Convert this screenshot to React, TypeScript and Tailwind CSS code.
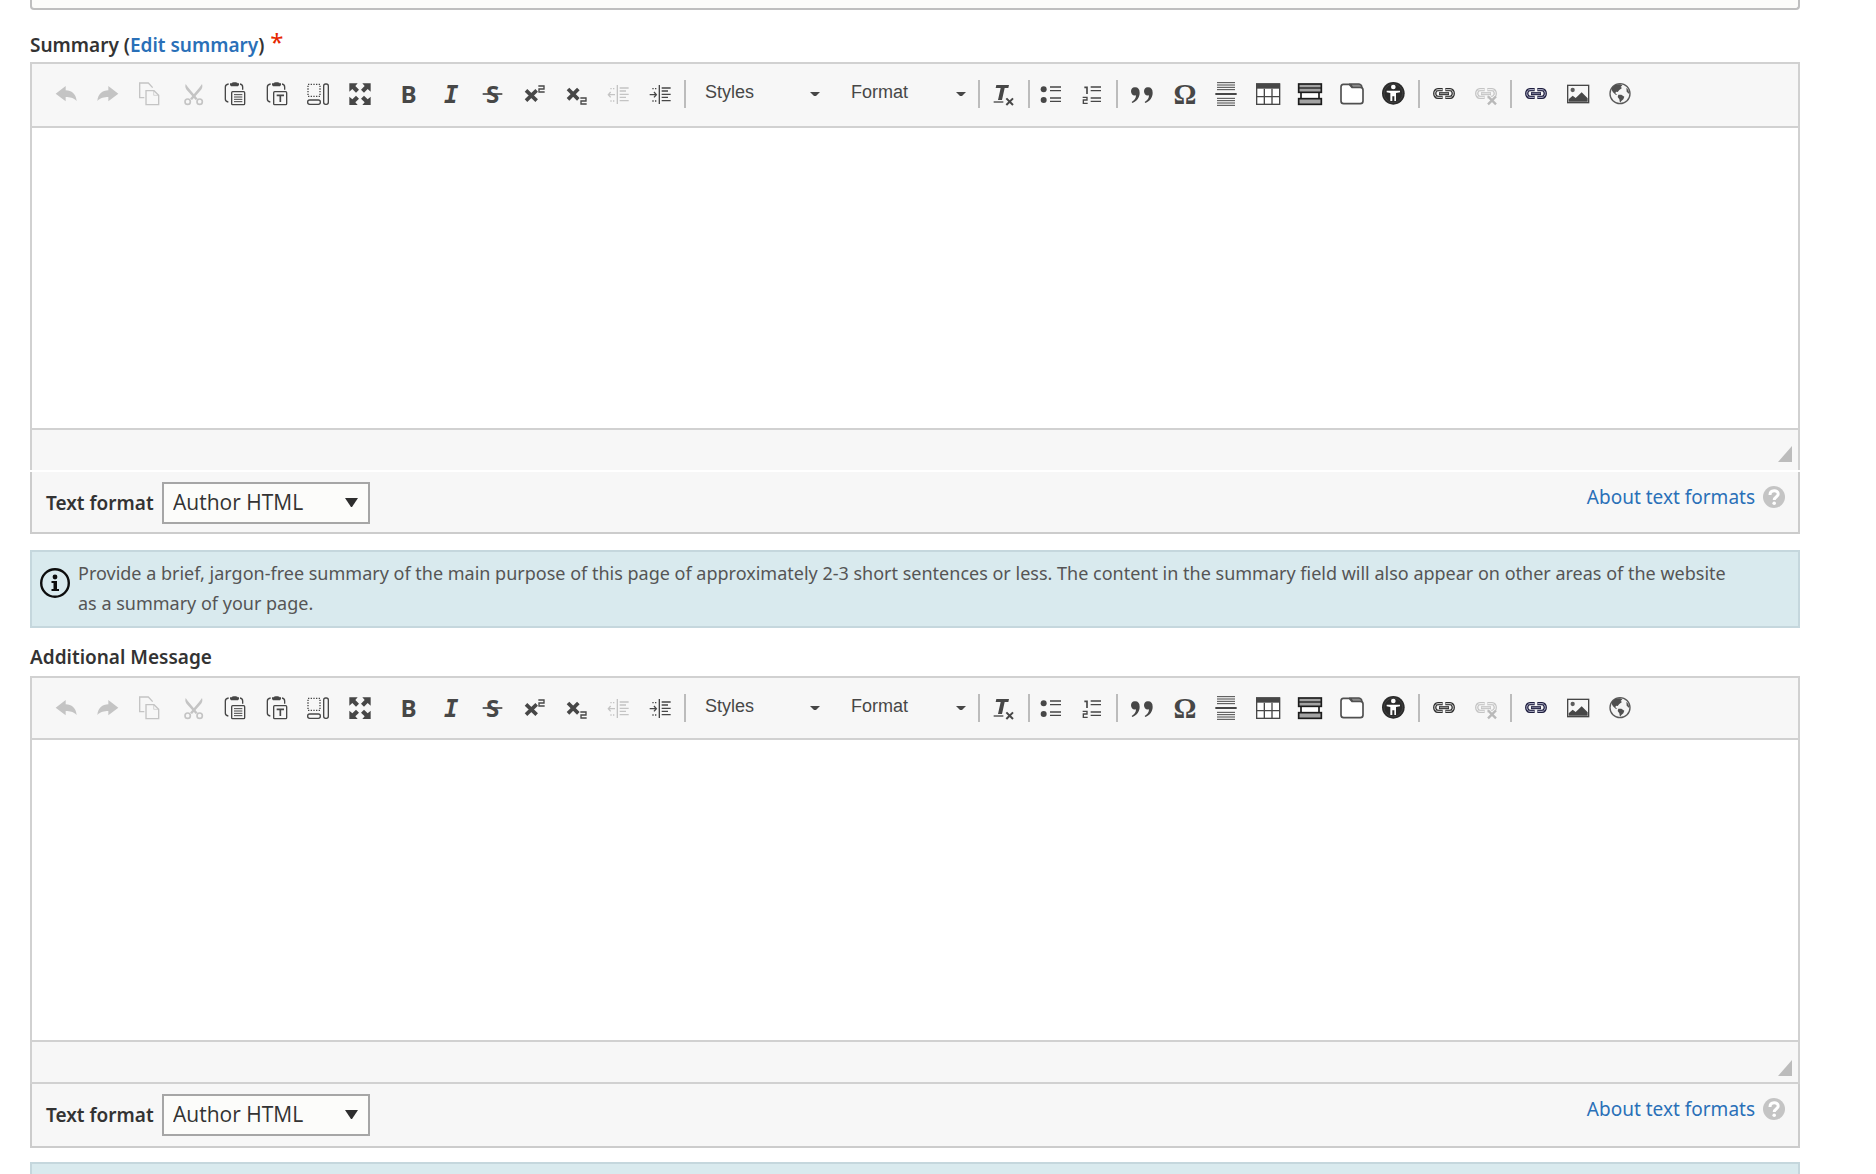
import type { ReactNode } from "react";

const INK = "#474747";
const FAINT = "#c4c4c4";

function Icon({ children }: { children: ReactNode }) {
  return (
    <svg viewBox="0 0 72 72" className="size-6 overflow-visible" aria-hidden="true" fill="none">
      {children}
    </svg>
  );
}

const undoArrow = "M5 35 L35 12 V25 C53 25 66 36 68 57 C58 47 48 45 35 45 V58 Z";

const undo = (
  <Icon>
    <path d={undoArrow} fill={FAINT} />
  </Icon>
);

const redo = (
  <Icon>
    <path d={undoArrow} fill={FAINT} transform="translate(72 0) scale(-1 1)" />
  </Icon>
);

const copy = (
  <Icon>
    <g stroke={FAINT} strokeWidth="4">
      <path d="M19 47 H5 V3 H31 L44 17" />
      <path d="M24 26 H48 L62 40 V68 H24 Z" />
      <path d="M47 27 V40 H61" strokeWidth="2" />
    </g>
  </Icon>
);

const cut = (
  <Icon>
    <path d="M17 6 C14 14 17 21 23 27 L47 54 L53 50 L24 16 Z" fill={FAINT} />
    <path d="M66 6 C69 14 66 21 60 27 L36 54 L30 50 L59 16 Z" fill={FAINT} />
    <circle cx="23" cy="59" r="8" stroke={FAINT} strokeWidth="5" />
    <circle cx="59" cy="59" r="8" stroke={FAINT} strokeWidth="5" />
  </Icon>
);

const clipboard = (
  <>
    <path d="M20 6 C12 7 10 9 10 15 V52 C10 57 12 59 19 60" stroke={INK} strokeWidth="4" />
    <path d="M54 6 C60 7 62 9 62 15 V23" stroke={INK} strokeWidth="4" />
    <path d="M24 4 H29 C30 0 46 0 47 4 H51 V9 L48 13 H27 L24 9 Z" fill={INK} />
    <rect x="29" y="29" width="39" height="39" rx="3" stroke={INK} strokeWidth="4" />
  </>
);

const paste = (
  <Icon>
    {clipboard}
    <path d="M36 38 H61 M36 45 H61 M36 52 H61 M36 59 H61" stroke={INK} strokeWidth="3" />
  </Icon>
);

const pasteText = (
  <Icon>
    {clipboard}
    <path d="M38 40 H60 M49 38 V60" stroke={INK} strokeWidth="5" />
  </Icon>
);

const selectAll = (
  <Icon>
    <rect x="6" y="7" width="36" height="36" stroke={INK} strokeWidth="4" strokeDasharray="4 4" />
    <rect x="5" y="54" width="38" height="13" rx="6" stroke={INK} strokeWidth="4" />
    <rect x="53" y="6" width="14" height="61" rx="6" stroke={INK} strokeWidth="4" />
  </Icon>
);

const cornerArrow = "M4 4 H29 L22 12 L33 23 L24 32 L13 21 L4 29 Z";

const maximize = (
  <Icon>
    <g fill={INK}>
      <path d={cornerArrow} />
      <path d={cornerArrow} transform="translate(72 0) scale(-1 1)" />
      <path d={cornerArrow} transform="translate(0 73) scale(1 -1)" />
      <path d={cornerArrow} transform="translate(72 73) scale(-1 -1)" />
    </g>
  </Icon>
);

function Letter({ char, className, x = 36, y = 63, size = 72 }: { char: string; className: string; x?: number; y?: number; size?: number }) {
  return (
    <text x={x} y={y} fontSize={size} textAnchor="middle" fill={INK} className={className}>
      {char}
    </text>
  );
}

const bold = (
  <Icon>
    <Letter char="B" className="font-['Open_Sans'] font-bold" x={38} />
  </Icon>
);

const italic = (
  <Icon>
    <Letter char="I" className="font-['DejaVu_Sans_Mono'] font-bold italic" x={40} />
  </Icon>
);

const strike = (
  <Icon>
    <Letter char="S" className="font-['Open_Sans'] font-bold" x={38} />
    <path d="M8 36 H67" stroke={INK} strokeWidth="5" />
  </Icon>
);

const smallTwo = "M0 2 H17 V11 H2 V20 H19";

const superscript = (
  <Icon>
    <path d="M12 25 L44 56 M44 25 L12 56" stroke={INK} strokeWidth="11" />
    <path d={smallTwo} transform="translate(49 10)" stroke={INK} strokeWidth="4" />
  </Icon>
);

const subscript = (
  <Icon>
    <path d="M12 21 L43 52 M43 21 L12 52" stroke={INK} strokeWidth="11" />
    <path d={smallTwo} transform="translate(49 46)" stroke={INK} strokeWidth="4" />
  </Icon>
);

const indentLines = "M41 18 H68 M41 27 H60 M41 37 H68 M41 46 H60 M41 56 H68";
const indentDots = "M13 20 H17 M21 20 H25 M13 57 H17 M21 57 H25";

const outdent = (
  <Icon>
    <g stroke={FAINT} strokeWidth="4">
      <path d={indentLines} />
      <path d={indentDots} />
      <path d="M34 9 V66 M7 38 H27 M14 30 L7 38 L14 46" />
    </g>
  </Icon>
);

const indent = (
  <Icon>
    <g stroke={INK} strokeWidth="4">
      <path d={indentLines} />
      <path d={indentDots} />
      <path d="M34 9 V66 M5 38 H25 M18 30 L25 38 L18 46" />
    </g>
  </Icon>
);

const removeFormat = (
  <Icon>
    <path d="M13 9 H51 L49 18 H38 L30 54 H18 L26 18 H11 Z" fill={INK} />
    <path d="M5 60 H34" stroke={INK} strokeWidth="4" />
    <path d="M43 49 L63 69 M63 49 L43 69" stroke={INK} strokeWidth="6" />
  </Icon>
);

const bullets = (
  <Icon>
    <circle cx="8" cy="22" r="9" fill={INK} />
    <circle cx="8" cy="54" r="9" fill={INK} />
    <path d="M27 15 H60 M27 26 H60 M27 48 H60 M27 58 H60" stroke={INK} strokeWidth="4" />
  </Icon>
);

const numbers = (
  <Icon>
    <path d="M10 16 H18 V36" stroke={INK} strokeWidth="5" />
    <path d="M5 46 H18 V54 H7 V64 H20" stroke={INK} strokeWidth="4" />
    <path d="M29 15 H60 M29 26 H60 M29 48 H60 M29 58 H60" stroke={INK} strokeWidth="4" />
  </Icon>
);

const quoteMark = "M14 16 C23 15 29 21 29 32 C29 46 21 57 7 63 L5 60 C14 55 18 48 18 40 C9 43 3 36 3 28 C3 21 7 16 14 16 Z";

const quote = (
  <Icon>
    <path d={quoteMark} fill={INK} />
    <path d={quoteMark} transform="translate(39 0)" fill={INK} />
  </Icon>
);

const omega = (
  <Icon>
    <Letter char="Ω" className="font-['Liberation_Serif'] font-bold" x={39} y={66} size={86} />
  </Icon>
);

const pageBreak = (
  <Icon>
    <path
      d="M9 2 H63 M9 9 H63 M9 16 H63 M9 23 H63 M9 49 H63 M9 56 H63 M9 63 H63 M9 70 H63"
      stroke={INK}
      strokeWidth="3"
    />
    <path d="M4 36 H68" stroke={INK} strokeWidth="6" />
  </Icon>
);

const table = (
  <Icon>
    <rect x="2" y="6" width="69" height="61" fill="#ffffff" stroke={INK} strokeWidth="4" />
    <rect x="0" y="4" width="72" height="16" fill={INK} />
    <path d="M25 20 V67 M48 20 V67 M2 44 H70" stroke={INK} strokeWidth="4" />
  </Icon>
);

const template = (
  <Icon>
    <rect x="9" y="28" width="54" height="24" fill="#ffffff" stroke="#1c1c1c" strokeWidth="5" />
    <rect x="2" y="6" width="68" height="25" fill="#a3a3a3" stroke="#1c1c1c" strokeWidth="5" />
    <path d="M2 18 H70" stroke="#1c1c1c" strokeWidth="4" />
    <rect x="2" y="50" width="68" height="17" fill="#a3a3a3" stroke="#1c1c1c" strokeWidth="5" />
  </Icon>
);

const folder = (
  <Icon>
    <path
      d="M10 7 H28 L36 16 H61 Q69 16 69 24 V57 Q69 65 61 65 H11 Q3 65 3 57 V15 Q3 7 10 7 Z"
      fill="#ffffff"
      stroke="#505050"
      strokeWidth="5"
    />
    <path d="M31 6 H57 Q65 7 66 16 H38 Z" fill="#8b8b8b" stroke="#505050" strokeWidth="4" />
  </Icon>
);

const accessibility = (
  <Icon>
    <circle cx="34" cy="34" r="34" fill="#2b2b2b" />
    <circle cx="34" cy="34" r="28" stroke="#4a4a4a" strokeWidth="2" />
    <circle cx="34" cy="15" r="7" fill="#ffffff" />
    <path d="M14 26 H54 V31 L42 33 V57 H37 V43 H31 V57 H25 V33 L14 31 Z" fill="#ffffff" />
  </Icon>
);

function chain(outer: string, inner: string) {
  return (
    <>
      <path
        d="M32 23 H18 C5 23 5 46 18 46 H32 M40 23 H54 C67 23 67 46 54 46 H40"
        stroke={outer}
        strokeWidth="10"
      />
      <path
        d="M31 23 H18 C5 23 5 46 18 46 H31 M41 23 H54 C67 23 67 46 54 46 H41"
        stroke={inner}
        strokeWidth="3"
      />
      <path d="M21 35 H51" stroke={outer} strokeWidth="9" />
      <path d="M23 35 H49" stroke={inner} strokeWidth="2" />
    </>
  );
}

const link = <Icon>{chain("#2e2e2e", "#dedede")}</Icon>;

const linkNavy = <Icon>{chain("#1c1c3d", "#bdbdd2")}</Icon>;

const unlink = (
  <Icon>
    {chain("#c4c4c4", "#f7f7f7")}
    <path d="M42 43 L66 67 M66 43 L42 67" stroke="#f7f7f7" strokeWidth="12" />
    <path d="M42 43 L66 67 M66 43 L42 67" stroke="#b9b9b9" strokeWidth="7" />
  </Icon>
);

const image = (
  <Icon>
    <rect x="5" y="10" width="63" height="52" fill="#f7f7f7" stroke={INK} strokeWidth="4" />
    <circle cx="20" cy="24" r="6.5" fill="#5d5d5d" />
    <path d="M8 59 V52 L20 41 L29 48 L47 31 L65 49 V59 Z" fill={INK} />
  </Icon>
);

const globe = (
  <Icon>
    <circle cx="36" cy="35" r="30" fill="#f4f4f4" stroke="#5a5a5a" strokeWidth="4" />
    <path
      d="M12 17 C18 9 27 6 37 7 L43 10 L38 15 L42 18 L34 24 L29 30 L24 29 L22 34 L28 38 L23 38 L15 31 L11 24 Z"
      fill="#505050"
    />
    <path d="M31 38 L40 38 L49 44 L46 52 L40 57 L36 63 L34 52 L29 45 Z" fill="#505050" />
    <path d="M55 17 L61 24 L64 35 L60 34 L56 28 Z" fill="#505050" />
  </Icon>
);

type Tool = { label: string; icon: ReactNode; disabled?: boolean };

const history: Tool[] = [
  { label: "Undo", icon: undo, disabled: true },
  { label: "Redo", icon: redo, disabled: true },
  { label: "Copy", icon: copy, disabled: true },
  { label: "Cut", icon: cut, disabled: true },
  { label: "Paste", icon: paste },
  { label: "Paste as plain text", icon: pasteText },
  { label: "Select all", icon: selectAll },
  { label: "Maximize", icon: maximize },
];

const styling: Tool[] = [
  { label: "Bold", icon: bold },
  { label: "Italic", icon: italic },
  { label: "Strikethrough", icon: strike },
  { label: "Superscript", icon: superscript },
  { label: "Subscript", icon: subscript },
  { label: "Decrease indent", icon: outdent, disabled: true },
  { label: "Increase indent", icon: indent },
];

const inserts: Tool[] = [
  { label: "Block quote", icon: quote },
  { label: "Insert special character", icon: omega },
  { label: "Insert page break", icon: pageBreak },
  { label: "Table", icon: table },
  { label: "Templates", icon: template },
  { label: "Browse files", icon: folder },
  { label: "Accessibility checker", icon: accessibility },
];

function Tools({ items, tight = false }: { items: Tool[]; tight?: boolean }) {
  return (
    <div className="flex">
      {items.map((t) => (
        <button
          key={t.label}
          type="button"
          aria-label={t.label}
          disabled={t.disabled}
          className={`flex h-8 items-center justify-center ${tight ? "w-10" : "w-[42px]"}`}
        >
          {t.icon}
        </button>
      ))}
    </div>
  );
}

function Separator() {
  return <div className="mx-[3px] mt-0.5 h-7 w-0.5 bg-[#bcbcbc]" />;
}

function Combo({ name, width }: { name: string; width: string }) {
  return (
    <div className={`relative ${width}`}>
      <select
        aria-label={name}
        className="block h-7 w-full appearance-none bg-transparent pl-4 font-['Liberation_Sans',sans-serif] text-[18px] leading-7 text-[#474747]"
      >
        <option>{name}</option>
      </select>
      <svg viewBox="0 0 10 5" className="pointer-events-none absolute top-3.5 left-[121px] h-[5px] w-2.5" aria-hidden="true">
        <path d="M0 0 H10 L6 4 H4 Z" fill={INK} />
      </svg>
    </div>
  );
}

function Editor({ id, first = false }: { id: string; first?: boolean }) {
  return (
    <div>
      <div className="border-2 border-b-0 border-[#d1d1d1]">
        <div role="toolbar" className={`flex items-start bg-[#f7f7f7] pt-3.5 pl-[13px] ${first ? "pb-4" : "pb-3.5"}`}>
          <Tools items={history} />
          <div className="ml-1.5">
            <Tools items={styling} />
          </div>
          <Separator />
          <Combo name="Styles" width="w-[146px]" />
          <Combo name="Format" width="w-[140px]" />
          <Separator />
          <Tools items={[{ label: "Remove format", icon: removeFormat }]} />
          <Separator />
          <Tools
            tight
            items={[
              { label: "Bulleted list", icon: bullets },
              { label: "Numbered list", icon: numbers },
            ]}
          />
          <Separator />
          <Tools items={inserts} />
          <Separator />
          <Tools
            items={[
              { label: "Link", icon: link },
              { label: "Unlink", icon: unlink, disabled: true },
            ]}
          />
          <Separator />
          <Tools
            items={[
              { label: "Site link", icon: linkNavy },
              { label: "Image", icon: image },
              { label: "Embed", icon: globe },
            ]}
          />
        </div>
        <textarea
          id={id}
          className="block h-[304px] w-full resize-none border-y-2 border-[#d1d1d1] bg-white p-5 text-[19px] outline-none"
        />
        <div className={`flex h-10 items-end justify-end bg-[#f7f7f7] pr-1.5 ${first ? "pb-2" : "pb-1.5"}`}>
          <svg viewBox="0 0 14 16" className="h-4 w-3.5" aria-hidden="true">
            <path d="M14 0 V16 H0 Z" fill="#bcbcbc" />
          </svg>
        </div>
      </div>
      <div className={`h-0.5 ${first ? "bg-white" : "bg-[#d1d1d1]"}`} />
      <div
        className={`flex items-start justify-between border-2 border-t-0 border-[#cccccc] bg-[#f7f7f7] pt-2.5 pr-[13px] pl-3.5 ${first ? "pb-2" : "pb-2.5"}`}
      >
        <div className="flex items-center">
          <label htmlFor={`${id}-format`} className="w-[116px] text-[19px] font-semibold whitespace-nowrap">
            Text format
          </label>
          <div className="relative">
            <select
              id={`${id}-format`}
              className="block h-[42px] w-[208px] appearance-none border-2 border-[#a6a6a6] bg-[#fcfcfa] pl-[9px] font-['Open_Sans',sans-serif] text-[21px] text-[#333333]"
            >
              <option>Author HTML</option>
            </select>
            <svg viewBox="0 0 14 10" className="pointer-events-none absolute top-4 right-[11px] h-2.5 w-3.5" aria-hidden="true">
              <path d="M0 0 H13 L7 9 H6 Z" fill="#2e2e2e" />
            </svg>
          </div>
        </div>
        <a href="#formats" className="flex items-center gap-2 text-[19px] leading-[30px] text-[#2a70b8]">
          About text formats
          <svg viewBox="0 0 22 22" className="size-[22px]" aria-hidden="true" fill="none">
            <circle cx="11" cy="11" r="11" fill="#c4c4c4" />
            <path d="M7 9 C7 3.5 15.2 3.5 15.2 8 C15.2 11 11.2 11 11.2 14" stroke="#ffffff" strokeWidth="3" />
            <circle cx="11.2" cy="17.2" r="1.8" fill="#ffffff" />
          </svg>
        </a>
      </div>
    </div>
  );
}

export default function App() {
  return (
    <main className="h-screen overflow-hidden bg-white pr-[76px] pl-[30px] font-['Noto_Sans','Open_Sans',sans-serif] text-[#333333]">
      <input
        aria-label="Title"
        className="block h-2.5 w-full rounded-b-[4px] border-2 border-t-0 border-[#bfbfbf] bg-[#fcfcfa]"
      />

      <section>
        <div className="flex h-[52px] items-start gap-1.5 pt-5 text-[19px] leading-[30px] font-semibold">
          <label htmlFor="summary">
            Summary (
            <a href="#summary" className="text-[#2a70b8]">
              Edit summary
            </a>
            )
          </label>
          <span className="text-2xl leading-6 font-normal text-[#e62600]">*</span>
        </div>
        <Editor id="summary" first />
        <div className="mt-4 flex min-h-[78px] items-start border-2 border-[#c5d7dd] bg-[#d9eaee] pr-14 pl-2">
          <svg viewBox="0 0 30 30" className="mt-4 size-[30px] shrink-0" aria-hidden="true">
            <circle cx="15" cy="15" r="13.8" fill="none" stroke="#0d0d0d" strokeWidth="2.4" />
            <circle cx="15" cy="9" r="2.4" fill="#0d0d0d" />
            <path d="M11.5 13 H17 V21 H19 V23 H11.5 V21 H13.5 V15 H11.5 Z" fill="#0d0d0d" />
          </svg>
          <p className="mt-1.5 ml-2 text-[18px] leading-[30px] text-[#555555]">
            Provide a brief, jargon-free summary of the main purpose of this page of approximately 2-3 short sentences
            or less. The content in the summary field will also appear on other areas of the website as a summary of
            your page.
          </p>
        </div>
      </section>

      <section>
        <div className="flex h-12 items-start pt-3.5 text-[19px] leading-[30px] font-semibold">
          <label htmlFor="message">Additional Message</label>
        </div>
        <Editor id="message" />
        <div className="mt-3.5 h-20 border-2 border-[#c5d7dd] bg-[#d9eaee]" />
      </section>
    </main>
  );
}
